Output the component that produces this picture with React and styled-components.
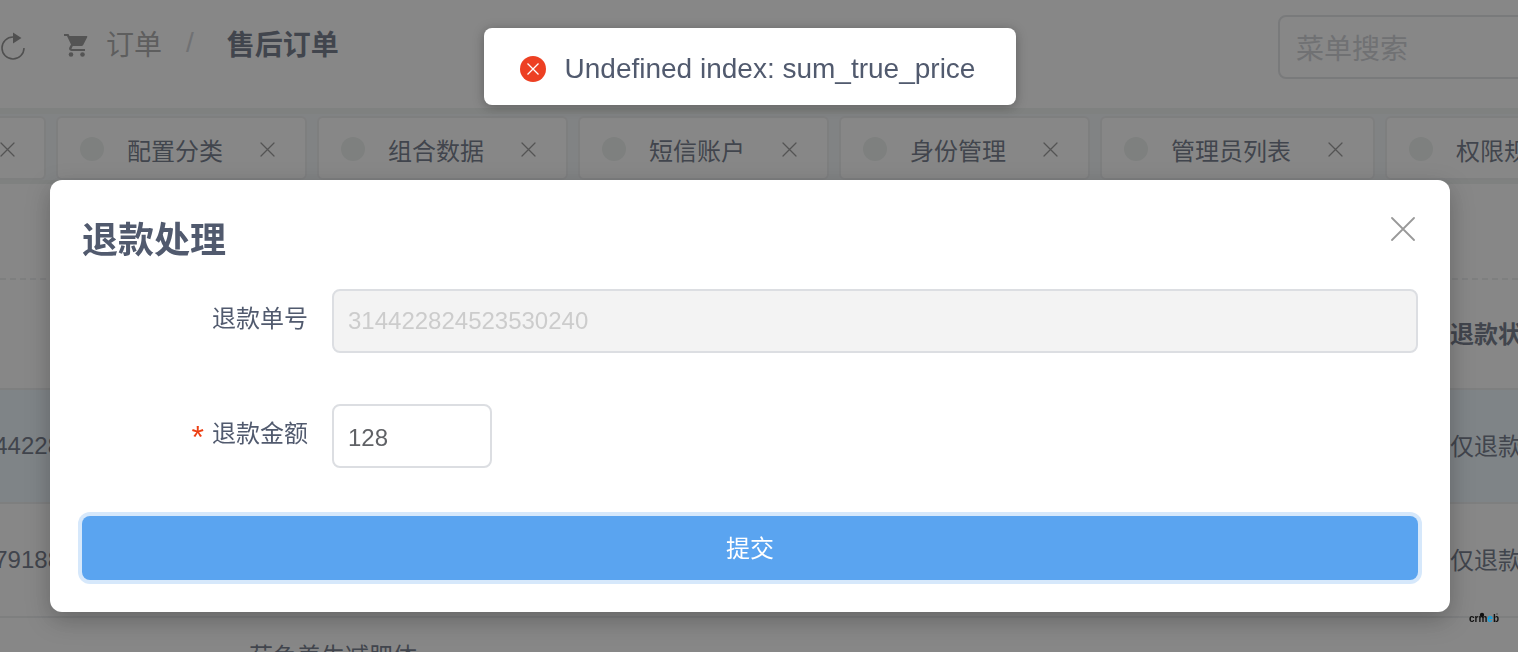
import React, { useState } from "react";
import styled, { createGlobalStyle } from "styled-components";

const tabs = ["配置分类", "组合数据", "短信账户", "身份管理", "管理员列表", "权限规则"];

const orders = [
  { id: "44228", goods: "", status: "仅退款", active: true },
  { id: "79188", goods: "", status: "仅退款" },
  { id: "", goods: "荷色养生减肥体", status: "" },
];

function Cross({ size, weight = 1.3 }) {
  return (
    <svg width={size} height={size} viewBox={`0 0 ${size} ${size}`} aria-hidden="true">
      <path
        d={`M1 1L${size - 1} ${size - 1}M${size - 1} 1L1 ${size - 1}`}
        stroke="currentColor"
        strokeWidth={weight}
        strokeLinecap="round"
      />
    </svg>
  );
}

function Header() {
  return (
    <TopBar>
      <IconButton aria-label="刷新">
        <svg width="26" height="30" viewBox="0 0 26 30">
          <path
            d="M13 6A11 11 0 1 0 24 17"
            fill="none"
            stroke="currentColor"
            strokeWidth="1.6"
          />
          <path d="M13 1.500L21.500 7L13 12.500Z" fill="currentColor" />
        </svg>
      </IconButton>
      <Breadcrumb>
        <svg width="24" height="28" viewBox="0 -4 24 28">
          <path
            d="M0 1H4.500L5.500 3H22.500C23.200 3 23.500 3.500 23.200 4.200L19.200 12C18.800 12.700 18.200 13 17.500 13H8.800L7.600 15.400C7.400 15.800 7.600 16 8 16H21V18H7.500C5.400 18 4.500 16 5.400 14.300L7 11.500L3 3H0Z"
            fill="currentColor"
          />
          <circle cx="7" cy="21.500" r="2.300" fill="currentColor" />
          <circle cx="18.500" cy="21.500" r="2.300" fill="currentColor" />
        </svg>
        <a href="#order">订单</a>
        <Slash>/</Slash>
        <strong>售后订单</strong>
      </Breadcrumb>
      <Search placeholder="菜单搜索" aria-label="菜单搜索" />
    </TopBar>
  );
}

function Tabs() {
  return (
    <TabBar>
      <Tab $cut>
        <TabClose aria-label="关闭">
          <Cross size={15} />
        </TabClose>
      </Tab>
      {tabs.map((name) => (
        <Tab key={name}>
          <Dot />
          {name}
          <TabClose aria-label={`关闭${name}`}>
            <Cross size={15} />
          </TabClose>
        </Tab>
      ))}
    </TabBar>
  );
}

function OrderTable() {
  return (
    <Table>
      <colgroup>
        <Col $width={61} />
        <Col $width={188} />
        <col />
        <Col $width={68} />
      </colgroup>
      <thead>
        <tr>
          <th colSpan={3} />
          <th>退款状态</th>
        </tr>
      </thead>
      <tbody>
        {orders.map((order, i) => (
          <Row key={i} $active={order.active}>
            <td>
              <OrderId>{order.id}</OrderId>
            </td>
            <td />
            <td>{order.goods}</td>
            <td>{order.status}</td>
          </Row>
        ))}
      </tbody>
    </Table>
  );
}

function RefundModal() {
  const [amount, setAmount] = useState("128");
  return (
    <Mask>
      <Modal role="dialog" aria-labelledby="refund-title">
        <ModalHead>
          <h2 id="refund-title">退款处理</h2>
          <ModalClose aria-label="关闭">
            <Cross size={24} weight={1.8} />
          </ModalClose>
        </ModalHead>
        <form onSubmit={(e) => e.preventDefault()}>
          <Field>
            <Label htmlFor="refund-no">退款单号</Label>
            <Input id="refund-no" value="314422824523530240" disabled readOnly />
          </Field>
          <Field>
            <Label htmlFor="refund-price" $required>
              退款金额
            </Label>
            <Input
              id="refund-price"
              $small
              value={amount}
              onChange={(e) => setAmount(e.target.value)}
            />
          </Field>
          <Submit type="submit">提交</Submit>
        </form>
      </Modal>
    </Mask>
  );
}

function Message({ children }) {
  return (
    <MessageWrap>
      <MessageBox role="alert">
        <svg width="26" height="26" viewBox="0 0 26 26" aria-hidden="true">
          <circle cx="13" cy="13" r="13" fill="#ed4023" />
          <path
            d="M7.500 7.500L18.500 18.500M18.500 7.500L7.500 18.500"
            stroke="white"
            strokeWidth="1.3"
          />
        </svg>
        {children}
      </MessageBox>
    </MessageWrap>
  );
}

function App() {
  return (
    <Page>
      <GlobalStyle />
      <Header />
      <Tabs />
      <Filters />
      <OrderTable />
      <RefundModal />
      <Message>Undefined index: sum_true_price</Message>
      <Brand>
        crm<span>e</span>b
        <svg width="28" height="6" viewBox="0 0 28 6" aria-hidden="true">
          <circle cx="11" cy="3" r="2.2" fill="#111" />
          <circle cx="26" cy="2" r="0.8" fill="#444" />
        </svg>
      </Brand>
    </Page>
  );
}

const GlobalStyle = createGlobalStyle`
  * {
    box-sizing: border-box;
  }
  body {
    margin: 0;
    color: #515a6e;
    font-family: "Liberation Sans", "Noto Sans CJK SC", sans-serif;
    font-size: 24px;
  }
  button, input {
    font: inherit;
    color: inherit;
  }
  button {
    border: none;
    background: none;
    padding: 0;
    cursor: pointer;
  }
  svg {
    display: block;
    flex-shrink: 0;
  }
`;

const Page = styled.div`
  height: 100vh;
  overflow: hidden;
  background: white;
`;

const TopBar = styled.header`
  display: flex;
  align-items: flex-start;
  height: 108px;
  overflow: hidden;
`;

const IconButton = styled.button`
  margin-top: 31px;
  color: #777;
`;

const Breadcrumb = styled.nav`
  display: flex;
  align-items: center;
  height: 86px;
  padding-left: 38px;
  font-size: 28px;
  color: #999;
  svg {
    color: #808080;
    margin-right: 18px;
  }
  a {
    color: inherit;
    text-decoration: none;
  }
  strong {
    color: #515a6e;
  }
`;

const Slash = styled.span`
  margin: 0 33px 0 24px;
  color: #c5c8ce;
`;

const Search = styled.input`
  flex: none;
  width: 300px;
  height: 64px;
  margin: 15px -60px 0 auto;
  padding: 6px 16px 0;
  border: 2px solid #dcdee2;
  border-radius: 8px;
  font-size: 28px;
  &::placeholder {
    color: #c5c8ce;
  }
`;

const TabBar = styled.div`
  display: flex;
  gap: 10px;
  height: 76px;
  padding-top: 2px;
  overflow: hidden;
  background: #f0f4f7;
  border-top: 6px solid #ebf0ed;
  border-bottom: 4px solid #ebf0ed;
`;

const Tab = styled.div`
  display: flex;
  flex: none;
  align-items: center;
  height: 64px;
  padding: 2px 30px 0 ${(props) => (props.$cut ? "0" : "22px")};
  border: 2px solid #e8eaec;
  border-left-width: ${(props) => (props.$cut ? "0" : "2px")};
  border-radius: ${(props) => (props.$cut ? "0 6px 6px 0" : "6px")};
  background: white;
  white-space: nowrap;
  &:first-child {
    padding-right: 29px;
  }
`;

const Dot = styled.span`
  width: 24px;
  height: 24px;
  margin-right: 23px;
  border-radius: 50%;
  background: #e8eeea;
`;

const TabClose = styled.button`
  margin-left: 37px;
  color: #808080;
  ${Tab}:first-child & {
    margin-left: 0;
  }
`;

const Filters = styled.section`
  height: 96px;
  border-bottom: 2px dashed #e8eaec;
`;

const Table = styled.table`
  width: 100%;
  table-layout: fixed;
  border-collapse: collapse;
  th,
  td {
    height: 114px;
    padding: 0 0 4px;
    border-bottom: 2px solid #e8eaec;
    text-align: left;
    white-space: nowrap;
  }
  th {
    height: 109px;
  }
`;

const Col = styled.col`
  width: ${(props) => props.$width}px;
`;

const Row = styled.tr`
  background: ${(props) => (props.$active ? "#ebf7ff" : "white")};
  &:last-child td {
    height: 78px;
  }
`;

const OrderId = styled.div`
  display: flex;
  justify-content: flex-end;
  padding-top: 4px;
  overflow: hidden;
`;

const Mask = styled.div`
  position: fixed;
  inset: 0;
  padding: 180px 68px 0 50px;
  background: rgba(55, 55, 55, 0.6);
`;

const Modal = styled.div`
  padding: 32px;
  border-radius: 12px;
  background: white;
  box-shadow: 0 8px 24px rgba(0, 0, 0, 0.25);
`;

const ModalHead = styled.div`
  display: flex;
  justify-content: space-between;
  align-items: flex-start;
  h2 {
    margin: 0 0 19px;
    font-size: 36px;
    line-height: 58px;
  }
`;

const ModalClose = styled.button`
  margin: 5px 3px 0 0;
  color: #999;
`;

const Field = styled.div`
  display: flex;
  align-items: flex-start;
  margin-bottom: 51px;
  & + & {
    margin-bottom: 48px;
  }
`;

const Label = styled.label`
  width: 250px;
  padding-right: 24px;
  line-height: 60px;
  text-align: right;
  &::before {
    content: ${(props) => (props.$required ? '"*"' : "none")};
    margin-right: 8px;
    color: #ed4014;
    font-size: 32px;
    line-height: 1;
    vertical-align: -6px;
  }
`;

const Input = styled.input`
  flex: ${(props) => (props.$small ? "none" : "1")};
  width: 160px;
  height: 64px;
  padding: 4px 14px 0;
  border: 2px solid #dcdee2;
  border-radius: 8px;
  background: white;
  color: #606266;
  &:disabled {
    padding-top: 0;
    background: #f3f3f3;
    color: #ccc;
  }
`;

const Submit = styled.button`
  display: block;
  width: 100%;
  height: 64px;
  padding-bottom: 4px;
  border-radius: 8px;
  background: #5aa4f0;
  color: white;
  box-shadow: 0 0 0 4px #d6e8fb;
`;

const MessageWrap = styled.div`
  position: fixed;
  top: 28px;
  left: 0;
  right: 18px;
  display: flex;
  justify-content: center;
`;

const MessageBox = styled.div`
  display: flex;
  align-items: center;
  gap: 19px;
  height: 77px;
  padding: 4px 41px 0 36px;
  border-radius: 8px;
  background: white;
  box-shadow: 0 2px 12px rgba(0, 0, 0, 0.3);
  font-size: 28px;
`;

const Brand = styled.div`
  position: fixed;
  right: 19px;
  bottom: 26px;
  color: #111;
  font-size: 10px;
  font-weight: bold;
  line-height: 14px;
  span {
    color: #0aa5e8;
  }
  svg {
    position: absolute;
    top: 0;
    right: 0;
  }
`;

export default App;
